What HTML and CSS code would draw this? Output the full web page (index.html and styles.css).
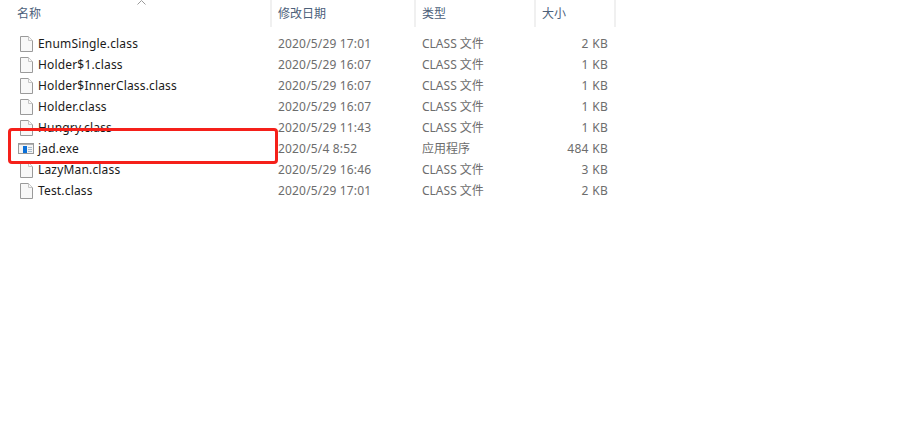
FILE: index.html
```html
<!DOCTYPE html>
<html lang="zh-CN">
<head>
    <meta charset="UTF-8">
    <title>文件列表</title>
    <link rel="stylesheet" href="styles.css">
</head>
<body>
<svg class="defs" width="0" height="0">
    <symbol id="file" viewBox="0 0 13 16">
        <path d="M.5.5h8l4 4v11H.5z" fill="#f8f8f8" stroke="#9a9a9a"/>
        <path d="M8.5.5v4h4" fill="#f8f8f8" stroke="#c4c4c4"/>
    </symbol>
    <symbol id="exe" viewBox="0 0 16 11">
        <rect x=".5" y=".5" width="15" height="10" fill="#f4f4f4" stroke="#9a9a9a"/>
        <rect x="1" y="1" width="14" height="1" fill="#b0b0b0"/>
        <rect x="5" y="3" width="4" height="7" fill="#0a6fd8"/>
        <path d="M10 4.5h4M10 6.5h4M10 8.5h4" stroke="#a9bccd"/>
    </symbol>
</svg>

<div class="list">
    <svg class="sort" viewBox="0 0 9 5"><path d="M.5 4.5l4-4 4 4" fill="none" stroke="#9a9a9a"/></svg>

    <!-- Header -->
    <div class="row head">
        <div class="col">名称</div>
        <div class="col">修改日期</div>
        <div class="col">类型</div>
        <div class="col">大小</div>
    </div>

    <!-- Files -->
    <div class="files">
        <div class="row item">
            <div class="name"><svg class="icon"><use href="#file"/></svg>EnumSingle.class</div>
            <div class="date">2020/5/29 17:01</div>
            <div class="type">CLASS 文件</div>
            <div class="size">2 KB</div>
        </div>
        <div class="row item">
            <div class="name"><svg class="icon"><use href="#file"/></svg>Holder$1.class</div>
            <div class="date">2020/5/29 16:07</div>
            <div class="type">CLASS 文件</div>
            <div class="size">1 KB</div>
        </div>
        <div class="row item">
            <div class="name"><svg class="icon"><use href="#file"/></svg>Holder$InnerClass.class</div>
            <div class="date">2020/5/29 16:07</div>
            <div class="type">CLASS 文件</div>
            <div class="size">1 KB</div>
        </div>
        <div class="row item">
            <div class="name"><svg class="icon"><use href="#file"/></svg>Holder.class</div>
            <div class="date">2020/5/29 16:07</div>
            <div class="type">CLASS 文件</div>
            <div class="size">1 KB</div>
        </div>
        <div class="row item">
            <div class="name"><svg class="icon"><use href="#file"/></svg>Hungry.class</div>
            <div class="date">2020/5/29 11:43</div>
            <div class="type">CLASS 文件</div>
            <div class="size">1 KB</div>
        </div>
        <div class="row item">
            <div class="name"><svg class="icon icon-exe"><use href="#exe"/></svg>jad.exe</div>
            <div class="date">2020/5/4 8:52</div>
            <div class="type">应用程序</div>
            <div class="size">484 KB</div>
        </div>
        <div class="row item">
            <div class="name"><svg class="icon"><use href="#file"/></svg>LazyMan.class</div>
            <div class="date">2020/5/29 16:46</div>
            <div class="type">CLASS 文件</div>
            <div class="size">3 KB</div>
        </div>
        <div class="row item">
            <div class="name"><svg class="icon"><use href="#file"/></svg>Test.class</div>
            <div class="date">2020/5/29 17:01</div>
            <div class="type">CLASS 文件</div>
            <div class="size">2 KB</div>
        </div>
    </div>

    <!-- Red annotation -->
    <div class="mark"></div>
</div>
</body>
</html>
```

FILE: styles.css
```css
body {
    margin: 0;
    background-color: #fff;
    font-family: "Noto Sans", "Noto Sans CJK SC", sans-serif;
    font-size: 12px;
}
.defs {
    position: absolute;
}
.list {
    position: relative;
    width: 616px;
}
.row {
    display: grid;
    grid-template-columns: 272px 144px 120px 80px;
}
.head {
    height: 26px;
    color: #4c607a;
}
.col {
    line-height: 27px;
    padding-left: 6px;
    border-right: 2px solid #f0f0f0;
    box-sizing: border-box;
}
.col:first-child {
    padding-left: 17px;
}
.files {
    margin-top: 7px;
}
.item {
    height: 21px;
    line-height: 21px;
    color: #6d6d6d;
    letter-spacing: 0.17px;
}
.name {
    display: flex;
    align-items: center;
    padding-left: 20px;
    color: #1a1a1a;
}
.icon {
    width: 13px;
    height: 16px;
    margin-right: 5px;
}
.icon-exe {
    width: 16px;
    height: 11px;
    margin-left: -2px;
    margin-right: 4px;
}
.date,
.type {
    padding-left: 6px;
}
.type {
    letter-spacing: 0;
}
.size {
    text-align: right;
    padding-right: 8px;
    letter-spacing: 0.3px;
}
.sort {
    position: absolute;
    left: 137px;
    top: 0;
    width: 9px;
    height: 5px;
}
.mark {
    position: absolute;
    left: 8px;
    top: 128px;
    width: 264px;
    height: 30px;
    border: 3px solid #f5201a;
    border-radius: 4px;
}
```
